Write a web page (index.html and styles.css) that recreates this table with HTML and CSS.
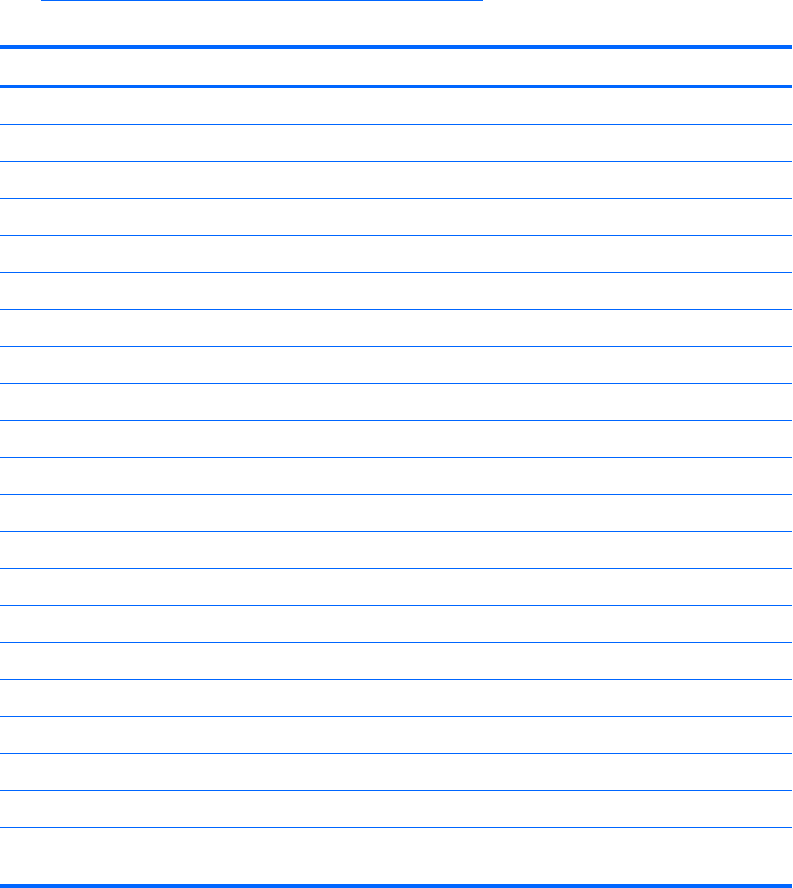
FILE: index.html
```html
<!DOCTYPE html>
<html>
<head>
<meta charset="utf-8">
<link rel="stylesheet" href="styles.css">
</head>
<body>
<div class="page">
  <div class="link-rule"></div>
  <div class="table">
    <div class="head"></div>
    <div class="row"></div>
    <div class="row"></div>
    <div class="row"></div>
    <div class="row"></div>
    <div class="row"></div>
    <div class="row"></div>
    <div class="row"></div>
    <div class="row"></div>
    <div class="row"></div>
    <div class="row"></div>
    <div class="row"></div>
    <div class="row"></div>
    <div class="row"></div>
    <div class="row"></div>
    <div class="row"></div>
    <div class="row"></div>
    <div class="row"></div>
    <div class="row"></div>
    <div class="row"></div>
    <div class="row"></div>
    <div class="row last"></div>
  </div>
</div>
</body>
</html>
```
FILE: styles.css
```css
html, body {
  margin: 0;
  padding: 0;
  background: #ffffff;
  font-family: "Liberation Sans", Arial, sans-serif;
}
.page {
  display: flex;
  flex-direction: column;
  width: 792px;
}
.link-rule {
  height: 1px;
  width: 442px;
  margin-left: 41px;
  background: #0066ff;
}
.table {
  margin-top: 44px;
  border-top: 4px solid #0066ff;
  border-bottom: 4px solid #0066ff;
  display: flex;
  flex-direction: column;
}
.head {
  height: 36px;
  border-bottom: 3px solid #0066ff;
}
.row {
  height: 36px;
  border-bottom: 1px solid #0066ff;
}
.row.last {
  height: 56px;
  border-bottom: none;
}
```
